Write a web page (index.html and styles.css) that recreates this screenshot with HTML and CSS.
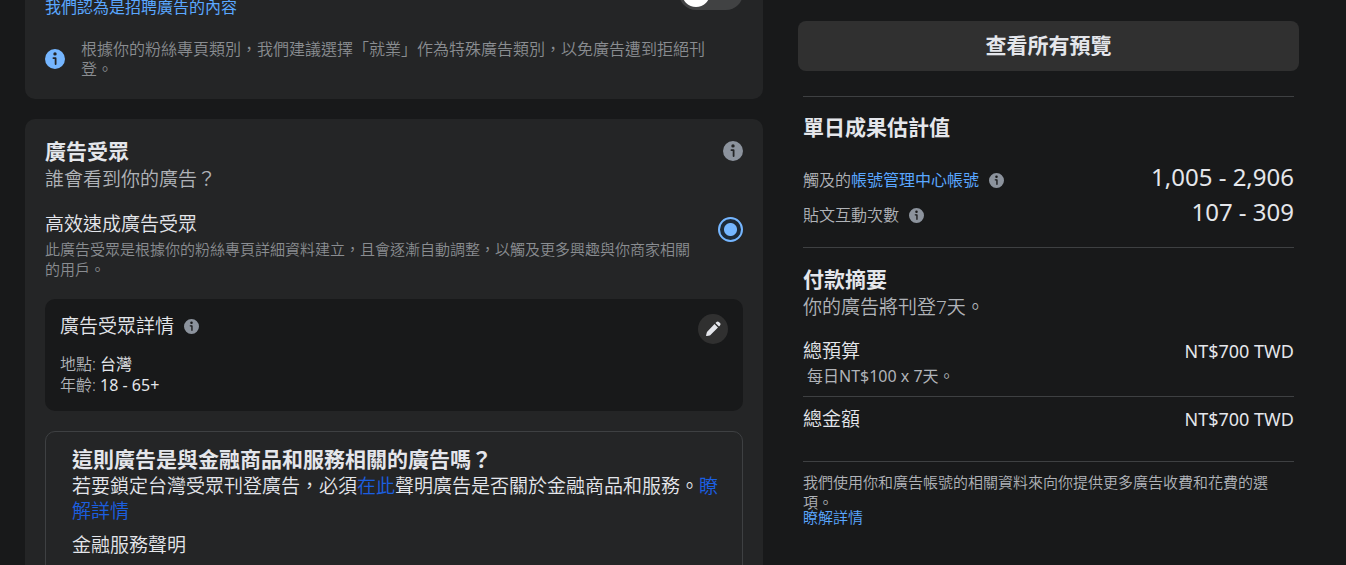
FILE: index.html
```html
<!DOCTYPE html>
<html lang="zh-Hant">
	<head>
		<meta charset="utf-8">
		<title>刊登廣告</title>
		<link rel="stylesheet" href="styles.css">
	</head>
	<body>
		<svg class="sprite" aria-hidden="true">
			<symbol id="info" viewBox="0 0 20 20">
				<path fill-rule="evenodd" d="M10 0a10 10 0 1 0 0 20 10 10 0 0 0 0-20zm0 3.2a1.7 1.7 0 1 1 0 3.4 1.7 1.7 0 0 1 0-3.400zM8.400 8.200h2.200c.5 0 .9.4.9.9v6a.9.9 0 0 1-1.800 0V10H8.400a.9.9 0 0 1 0-1.800z"/>
			</symbol>
			<symbol id="pencil" viewBox="0 0 16 16">
				<path d="M9.500 3l3.500 3.500-7.300 7.300c-.3.3-.6.5-1 .6l-2.700.7c-.6.1-1-.4-.9-.9l.700-2.700c.1-.4.3-.7.6-1zM10.500 2l1-1c.7-.7 1.700-.7 2.400 0l1.100 1.100c.7.7.7 1.700 0 2.400l-1 1z"/>
			</symbol>
		</svg>
		<div class="page">
			<main>
				<section class="card">
					<div class="category">
						<a href="#" id="category-label">我們認為是招聘廣告的內容</a>
						<input type="checkbox" class="switch" aria-labelledby="category-label">
					</div>
					<div class="notice">
						<svg class="icon blue"><use href="#info"/></svg>
						<p>根據你的粉絲專頁類別，我們建議選擇「就業」作為特殊廣告類別，以免廣告遭到拒絕刊登。</p>
					</div>
				</section>
				<section class="card audience">
					<div class="row">
						<h2>廣告受眾</h2>
						<button class="info" aria-label="廣告受眾說明"><svg class="icon"><use href="#info"/></svg></button>
					</div>
					<p class="subtitle">誰會看到你的廣告？</p>
					<div class="option">
						<label for="smart">
							<span class="name">高效速成廣告受眾</span>
							<span class="desc">此廣告受眾是根據你的粉絲專頁詳細資料建立，且會逐漸自動調整，以觸及更多興趣與你商家相關的用戶。</span>
						</label>
						<input type="radio" id="smart" name="audience" checked>
					</div>
					<div class="details">
						<div>
							<h3>廣告受眾詳情 <button class="info" aria-label="詳情說明"><svg class="icon small"><use href="#info"/></svg></button></h3>
							<p><span>地點:</span> 台灣</p>
							<p><span>年齡:</span> 18 - 65+</p>
						</div>
						<button class="edit" aria-label="編輯"><svg><use href="#pencil"/></svg></button>
					</div>
					<div class="finance">
						<h2>這則廣告是與金融商品和服務相關的廣告嗎？</h2>
						<p>若要鎖定台灣受眾刊登廣告，必須<a href="#">在此</a>聲明廣告是否關於金融商品和服務。<a href="#">瞭解詳情</a></p>
						<h3>金融服務聲明</h3>
					</div>
				</section>
			</main>
			<aside>
				<button class="preview">查看所有預覽</button>
				<section class="block estimate">
					<h2>單日成果估計值</h2>
					<div class="stat">
						<span class="label">觸及的<a href="#">帳號管理中心帳號</a> <button class="info" aria-label="觸及說明"><svg class="icon small"><use href="#info"/></svg></button></span>
						<span class="value">1,005 - 2,906</span>
					</div>
					<div class="stat">
						<span class="label">貼文互動次數 <button class="info" aria-label="互動說明"><svg class="icon small"><use href="#info"/></svg></button></span>
						<span class="value">107 - 309</span>
					</div>
				</section>
				<section class="block payment">
					<h2>付款摘要</h2>
					<p class="subtitle">你的廣告將刊登7天。</p>
					<div class="row budget"><span>總預算</span><span class="price">NT$700 TWD</span></div>
					<p class="daily">每日NT$100 x 7天。</p>
				</section>
				<section class="block total">
					<div class="row"><span>總金額</span><span class="price">NT$700 TWD</span></div>
				</section>
				<footer class="block">
					<p>我們使用你和廣告帳號的相關資料來向你提供更多廣告收費和花費的選項。</p>
					<a href="#">瞭解詳情</a>
				</footer>
			</aside>
		</div>
	</body>
</html>
```
FILE: styles.css
```css
* {
	box-sizing: border-box;
}

body {
	height: 100vh;
	margin: 0;
	overflow: hidden;
	background-color: #18191a;
	color: #e4e6eb;
	font-family: "Noto Sans", "Noto Sans CJK TC", sans-serif;
	font-size: 16px;
	font-weight: 350;
	line-height: 20px;
}

h2, h3, p {
	margin: 0;
}

h2 {
	font-size: 21px;
	font-weight: 700;
	line-height: 24px;
}

h3 {
	font-size: 19px;
	font-weight: 350;
	line-height: 24px;
}

a {
	color: #5aa7ff;
	text-decoration: none;
}

button {
	padding: 0;
	border: 0;
	background: none;
	color: inherit;
	font: inherit;
	cursor: pointer;
}

input {
	appearance: none;
	flex: none;
	margin: 0;
}

.sprite {
	display: none;
}

.page {
	display: grid;
	grid-template-columns: 738fr 501fr;
	gap: 35px;
	padding: 0 47px 0 25px;
}

/* the form is scrolled a little past its first rows */
main {
	margin-top: -44px;
}

.card {
	padding: 20px;
	border-radius: 10px;
	background-color: #242526;
}

.card + .card {
	margin-top: 20px;
}

.row {
	display: flex;
	justify-content: space-between;
	align-items: center;
}

.icon {
	display: block;
	flex: none;
	width: 20px;
	height: 20px;
	fill: #8c939d;
}

.icon.blue {
	fill: #75b6ff;
}

.icon.small {
	width: 15px;
	height: 15px;
}

.category {
	display: flex;
	justify-content: space-between;
	align-items: flex-start;
}

.category a {
	padding-top: 21px;
	font-weight: 400;
}

.switch {
	width: 64px;
	height: 34px;
	padding: 3px;
	border-radius: 17px;
	background-color: #414243;
}

.switch::before {
	content: "";
	display: block;
	width: 28px;
	height: 28px;
	border-radius: 50%;
	background-color: #fff;
}

.notice {
	display: flex;
	align-items: center;
	gap: 16px;
	margin-top: 22px;
	padding-right: 28px;
	color: #8a8d91;
}

.subtitle {
	margin-top: 4px;
	color: #b0b3b8;
	font-size: 19px;
	line-height: 24px;
}

.option {
	display: flex;
	justify-content: space-between;
	gap: 25px;
	margin-top: 21px;
}

.option .name {
	display: block;
	font-size: 19px;
	line-height: 24px;
}

.option .desc {
	display: block;
	margin-top: 3px;
	color: #8a8d91;
	font-size: 15px;
}

.option input {
	width: 25px;
	height: 25px;
	margin-top: 5px;
	border: 2px solid #75b6ff;
	border-radius: 50%;
	background: radial-gradient(circle, #75b6ff 6px, #1d2a38 7px);
}

.details {
	display: flex;
	justify-content: space-between;
	align-items: flex-start;
	margin-top: 20px;
	padding: 15px;
	border-radius: 10px;
	background-color: #18191a;
}

.details h3 {
	display: flex;
	align-items: center;
	gap: 10px;
	margin-bottom: 16px;
}

.details p {
	font-weight: 400;
	line-height: 21px;
}

.details span {
	color: #b0b3b8;
	font-weight: 350;
}

.edit {
	display: grid;
	place-items: center;
	width: 30px;
	height: 30px;
	border-radius: 50%;
	background-color: #303030;
}

.edit svg {
	width: 16px;
	height: 16px;
	fill: #e4e6eb;
}

.finance {
	margin-top: 20px;
	padding: 15px 20px 20px 26px;
	border: 1px solid #3e4042;
	border-radius: 10px;
}

.finance p {
	margin: 3px 0 9px;
	font-size: 19px;
	line-height: 25px;
}

.finance a {
	color: #1b5fe0;
}

aside {
	padding-top: 21px;
}

.preview {
	width: 100%;
	height: 50px;
	padding-bottom: 3px;
	border-radius: 8px;
	background-color: #303030;
	font-size: 21px;
	font-weight: 700;
}

.block {
	margin: 0 5px;
	border-top: 1px solid #3e4042;
}

.estimate {
	margin-top: 25px;
	padding: 18px 0;
}

.estimate h2 {
	margin-bottom: 20px;
}

.stat {
	display: flex;
	justify-content: space-between;
	align-items: flex-end;
}

.label {
	display: flex;
	align-items: center;
	padding-bottom: 4px;
	color: #b0b3b8;
}

.label a {
	font-weight: 400;
}

.label .info {
	margin-left: 10px;
}

.value {
	font-size: 24px;
	font-weight: 400;
	line-height: 35px;
}

.payment {
	padding: 19px 0 10px;
}

.block .row {
	font-size: 19px;
	line-height: 24px;
}

.budget {
	margin-top: 20px;
}

.block .price {
	font-size: 18px;
	font-weight: 400;
}

.daily {
	margin-top: 3px;
	padding-left: 4px;
	color: #b0b3b8;
	font-weight: 400;
}

.total {
	padding: 10px 0 30px;
}

footer {
	padding-top: 10px;
	color: #b0b3b8;
	font-size: 15px;
}

footer a {
	display: block;
	margin-top: -3px;
	line-height: 16px;
}
```
